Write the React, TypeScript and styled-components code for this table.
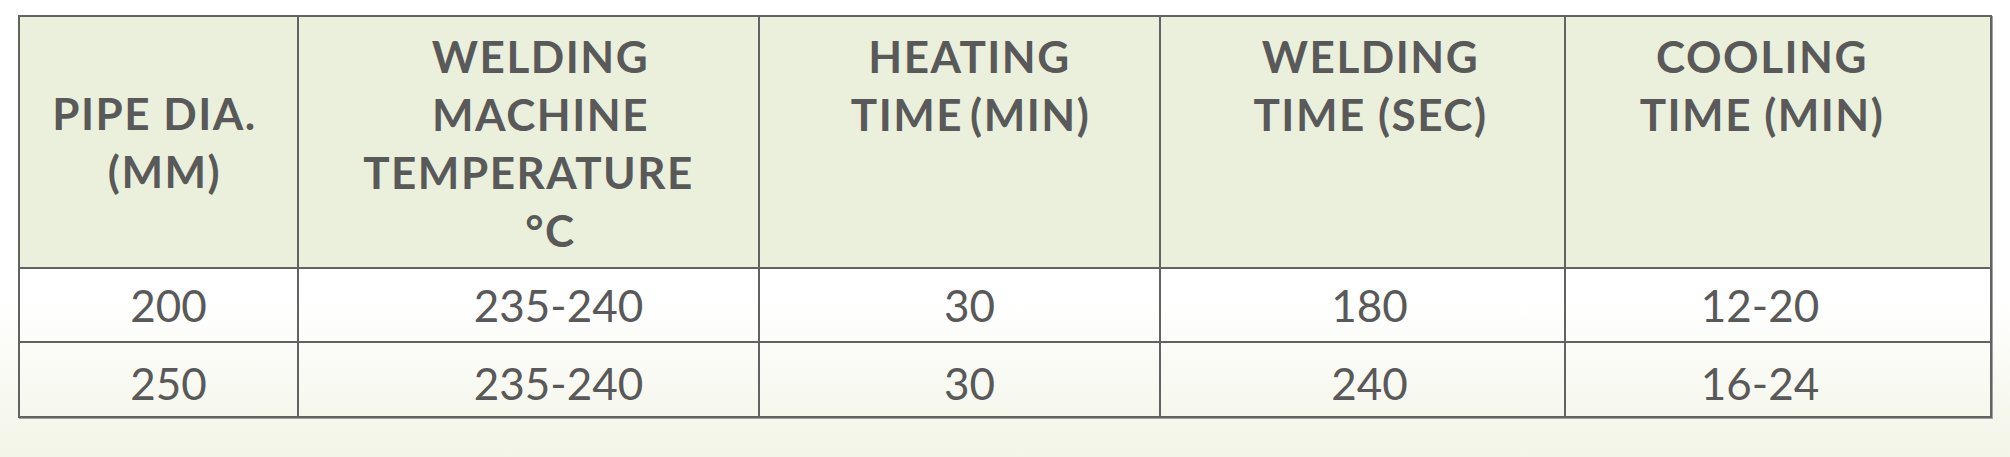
import React from "react";
import styled, { createGlobalStyle } from "styled-components";

const GlobalStyle = createGlobalStyle`
  html, body {
    margin: 0;
    padding: 0;
    background: #ffffff;
  }
`;

type Line = [string, number];

const headers: { lines: Line[]; middle?: boolean }[] = [
  { lines: [["PIPE DIA.", -4], ["(MM)", 6]], middle: true },
  { lines: [["WELDING", 12], ["MACHINE", 12], ["TEMPERATURE", 0], ["°C", 22]] },
  { lines: [["HEATING", 10], ["TIME\u2009(MIN)", 11]] },
  { lines: [["WELDING", 8], ["TIME (SEC)", 8]] },
  { lines: [["COOLING", -16], ["TIME (MIN)", -16]] },
];

const colWidths = [279, 461, 401, 405, 426];
const bodyShift = [10, 30, 10, 7, -18];

const rows = [
  ["200", "235-240", "30", "180", "12-20"],
  ["250", "235-240", "30", "240", "16-24"],
];

const App: React.FC = () => {
  return (
    <Page>
      <GlobalStyle />
      <Table>
        <colgroup>
          {colWidths.map((w, i) => (
            <col key={i} style={{ width: w }} />
          ))}
        </colgroup>
        <thead>
          <HeadRow>
            {headers.map((h, i) => (
              <HeadCell key={i} $middle={h.middle}>
                {h.lines.map(([text, shift], j) => (
                  <HeadLine key={j} $shift={shift}>
                    {text}
                  </HeadLine>
                ))}
              </HeadCell>
            ))}
          </HeadRow>
        </thead>
        <tbody>
          {rows.map((r, i) => (
            <BodyRow key={i} $tall={i === 1}>
              {r.map((v, j) => (
                <BodyCell key={j} $shift={bodyShift[j]} $lower={i === 1}>
                  {v}
                </BodyCell>
              ))}
            </BodyRow>
          ))}
        </tbody>
      </Table>
    </Page>
  );
};

const Page = styled.div`
  box-sizing: border-box;
  height: 457px;
  padding: 15px 0 0 18px;
  background: linear-gradient(
    to bottom,
    #ffffff 0%,
    #ffffff 66%,
    #f9faf3 82%,
    #f2f5e7 100%
  );
`;

const Table = styled.table`
  border-collapse: collapse;
  table-layout: fixed;
  width: 1974px;
  border: 2px solid #626262;
  box-shadow: 1px 1px 0 #a0a0a0;
  font-family: Lato, "Open Sans", sans-serif;
  color: #595959;
`;

const HeadRow = styled.tr`
  height: 252px;
`;

const HeadCell = styled.th<{ $middle?: boolean }>`
  background: #ebf0dc;
  border: 2px solid #626262;
  vertical-align: ${(p) => (p.$middle ? "middle" : "top")};
  padding: ${(p) => (p.$middle ? "0" : "10px 0 0")};
  font-size: 44px;
  font-weight: 700;
  line-height: 58px;
  letter-spacing: 1.5px;
  text-align: center;
  white-space: nowrap;
`;

const HeadLine = styled.span<{ $shift: number }>`
  display: block;
  padding-left: ${(p) => Math.max(0, p.$shift * 2)}px;
  padding-right: ${(p) => Math.max(0, -p.$shift * 2)}px;
`;

const BodyRow = styled.tr<{ $tall?: boolean }>`
  height: ${(p) => (p.$tall ? 75 : 74)}px;
`;

const BodyCell = styled.td<{ $shift: number; $lower?: boolean }>`
  border: 2px solid #626262;
  padding: ${(p) => (p.$lower ? "6px" : "0")} ${(p) => Math.max(0, -p.$shift * 2)}px 0
    ${(p) => Math.max(0, p.$shift * 2)}px;
  vertical-align: middle;
  text-align: center;
  font-size: 44px;
  font-weight: 400;
  line-height: 52px;
`;

export default App;
